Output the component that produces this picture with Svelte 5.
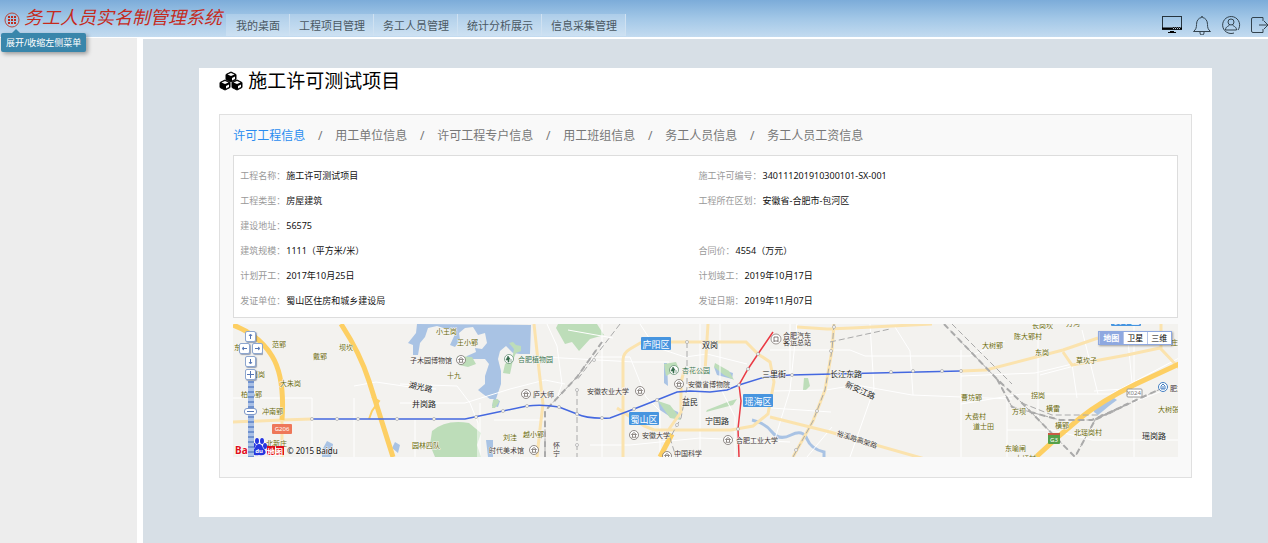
<script>
  const menu = ['我的桌面', '工程项目管理', '务工人员管理', '统计分析展示', '信息采集管理'];
  const tabs = ['许可工程信息', '用工单位信息', '许可工程专户信息', '用工班组信息', '务工人员信息', '务工人员工资信息'];
  let activeTab = $state(0);
  let mapType = $state('地图');
  let zoom = $state(11);

  const fields = [
    ['工程名称', '施工许可测试项目'],
    ['施工许可编号', '340111201910300101-SX-001'],
    ['工程类型', '房屋建筑'],
    ['工程所在区划', '安徽省-合肥市-包河区'],
    ['建设地址', '56575'],
    null,
    ['建筑规模', '1111（平方米/米）'],
    ['合同价', '4554（万元）'],
    ['计划开工', '2017年10月25日'],
    ['计划竣工', '2019年10月17日'],
    ['发证单位', '蜀山区住房和城乡建设局'],
    ['发证日期', '2019年11月07日']
  ];

  const towns = [
    [272, 344, '范郢'], [313, 356, '戴郢'], [339, 347, '坝坎'], [234, 347, '东岗'], [251, 374, '岗岗'],
    [280, 383, '大朱岗'], [241, 394, '柏小郢'], [262, 411, '冲南郢'], [266, 443, '北新庄'],
    [436, 331, '小王岗'], [457, 342, '王小郢'], [447, 375, '十九'], [412, 445, '园林四队'],
    [503, 437, '刘洼'], [523, 434, '越小郢'], [1032, 325, '长岗坎'], [1066, 323, '方河'], [1014, 336, '陈大郢村'],
    [982, 345, '大树郢'], [1035, 352, '东岗'], [1076, 360, '草坎子'], [961, 397, '曹坊郢'],
    [965, 416, '大费村'], [973, 426, '道士田'], [1031, 395, '拐岗'], [1046, 408, '横雷'],
    [1012, 411, '方坝'], [1055, 425, '横郢'], [1074, 432, '北瑶岗村'], [1005, 448, '东喻闸'],
    [1015, 458, '大圩村'], [1158, 409, '大树张'], [1171, 342, '庄义']
  ];
  const places = [
    [410, 360, '子木园博物馆'], [533, 394, '庐大师'], [587, 391, '安徽农业大学'],
    [688, 384, '安徽省博物院'], [642, 435, '安徽大学'], [736, 440, '合肥工业大学'],
    [674, 453, '中国科学'], [783, 335, '合肥汽车'], [783, 342, '客运总站'], [489, 450, '时代美术馆'],
    [553, 445, '怀'], [553, 453, '宁']
  ];
  const streets = [
    [412, 403, '井岗路', 0], [409, 384, '湖光路', 12], [702, 344, '双岗', 0], [762, 373, '三里街', 0],
    [830, 373, '长江东路', 0], [682, 401, '益民', 0], [705, 420, '宁国路', 0],
    [846, 383, '新安江路', 25], [1142, 435, '瑶岗路', 0]
  ];
  const districts = [[641, 337, '庐阳区'], [629, 412, '蜀山区'], [743, 394, '瑶海区'], [1111, 313, '长丰区']];
  const pins = [[461, 360], [526, 394], [640, 391], [679, 384], [634, 435], [728, 440], [667, 456], [534, 450]];
  const stops = [
    [312, 419], [337, 419], [358, 419], [397, 419], [434, 419], [476, 417], [503, 411], [527, 406], [559, 407],
    [577, 414], [602, 418], [634, 409], [657, 400], [739, 385], [748, 369], [758, 354], [738, 429], [792, 375],
    [891, 372], [913, 371], [942, 371], [961, 371], [687, 342], [677, 425], [577, 390], [577, 445], [594, 360],
    [834, 327], [831, 351], [817, 411], [796, 450]
  ];
</script>

<div class="page">
  <header>
    <button class="toggle" aria-label="展开/收缩左侧菜单">
      <svg viewBox="0 0 16 16" width="16" height="16">
        <circle cx="8" cy="8" r="7" fill="none" stroke="#b9483d" />
        <path d="M4 4h2v2H4zm3 0h2v2H7zm3 0h2v2h-2zM4 7h2v2H4zm3 0h2v2H7zm3 0h2v2h-2zM4 10h2v2H4zm3 0h2v2H7zm3 0h2v2h-2z" fill="#bf2c20" />
      </svg>
    </button>
    <span class="tip">展开/收缩左侧菜单</span>
    <h1>务工人员实名制管理系统</h1>
    <nav>
      {#each menu as item}<a href="#menu">{item}</a>{/each}
    </nav>
    <div class="tools">
      <button aria-label="桌面">
        <svg viewBox="0 0 22 20" width="22" height="20" fill="none" stroke="#26343e">
          <rect x="1.5" y="1.5" width="19" height="13" />
          <path d="M1 13.500h20" stroke="#000" stroke-width="2" />
          <path d="M12 12.500h1m1 0h1m1 0h1m1 0h1" stroke="#111" />
          <path d="M12 13.500h1m1 0h1m1 0h1m1 0h1" stroke="#bcd" />
          <path d="M7 17.500h8M9 16.500h4" stroke="#000" />
        </svg>
      </button>
      <button aria-label="通知">
        <svg viewBox="0 0 20 20" width="20" height="20" fill="none" stroke="#33434e">
          <path d="M1.500 16.500c2.500-2 3-4 3-7C4.500 5.500 6.500 3 9.500 2.500V1.500h1v1c3 .5 5 3 5 7 0 3 .5 5 3 7z" stroke-linejoin="round" />
          <path d="M8 17v1a2 2 0 0 0 4 0v-1" />
        </svg>
      </button>
      <button aria-label="用户">
        <svg viewBox="0 0 20 20" width="20" height="20" fill="none" stroke="#33434e">
          <path d="M17 15a8.500 8.500 0 1 0-4 3" />
          <circle cx="10" cy="7" r="3" />
          <path d="M8.500 9.500c0 2-4 1.500-4 5.500h11c0-4-4-3.500-4-5.500" />
        </svg>
      </button>
      <button aria-label="退出">
        <svg viewBox="0 0 20 20" width="20" height="20" fill="none" stroke="#33434e">
          <path d="M13 6V2.500H3Q1.500 2.500 1.500 4v12q0 1.500 1.500 1.500h10V14M9 10h10M14 6l4 4-4 4" />
        </svg>
      </button>
    </div>
  </header>

  <div class="body">
    <aside></aside>
    <main>
      <section class="card">
        <h2>
          <svg viewBox="0 0 24 20" width="24" height="20" stroke-linejoin="round">
            <g id="cube">
              <path d="M12 1l5 2.500v5L12 11 7 8.500v-5z" fill="#000" stroke="#000" />
              <path d="M12 2l3.500 1.500L12 5 8.500 3.500z" fill="#fff" />
              <path d="M13 7l3-1.500v2.500l-3 1.500z" fill="#fff" />
            </g>
            <use href="#cube" x="-6" y="8" />
            <use href="#cube" x="6" y="8" />
          </svg>
          施工许可测试项目
        </h2>

        <div class="panel">
          <div class="tabs">
            {#each tabs as tab, i}
              {#if i}<span class="slash">/</span>{/if}
              <button class:active={i === activeTab} onclick={() => (activeTab = i)}>{tab}</button>
            {/each}
          </div>

          <dl>
            {#each fields as f}
              <div>{#if f}<dt>{f[0]}：</dt><dd>{f[1]}</dd>{/if}</div>
            {/each}
          </dl>

          <div class="map">
            <svg class="canvas" viewBox="233 324 946 133" preserveAspectRatio="xMinYMin slice">
              <rect x="233" y="324" width="946" height="133" fill="#f3f2ef" />
              <g fill="#a9c3e4">
                <path d="M417 324l-1 9-8 10 5 2v10h5l2-12 5-6 3-9 9-2 13 4 6 2-6 13 5 2 5-7-1-7 6-5 8-1 5 8 7-2 2 10-5 6-7-1 1 4-9 4-2 3h20l4 5-4 12v8l-7 6 5 4 7 5h6l5-15v-13l-3-12 2-8 6-5 7 7 7 1h10l1-29z" />
                <path d="M494 398l6 3-2 6-6-1zM322 450l5-9 6 3-2 13h-9zM392 448l3-6 5 3-2 8zM486 440h7v17h-5zM664 363h3l1 23-4-3z" />
                <path d="M658 401l9 6 11 5 2 7-11-3-9-6zM714 367l19 6-1 6-15-4zM1093 409l6-4 8-3 7-4 3 2-8 6-6 5-5 4-4-3z" />
              </g>
              <g fill="#bdddb9">
                <path d="M558 324h39l7 11-14 4-11 12-7-9-7 2-9-16zM432 431q14-12 37-8l12 10-4 12 4 12h-46l-5-12z" />
                <path d="M509 343l4-1 3 3 5 1v5l-5 2-3 7-3 14-7-1 2-9 7-5 2-10zM493 400l5-1 1 3-4 6h-3z" />
                <path d="M457 356l15 1 4 7-8 3-9-2zM664 364l12-2 3 7-13 7zM658 401l12 4 7 9 4 6-11-2zM715 363l14 8 5 9-10-5-10-8zM707 410l23-9 7-2-4 6-27 7zM804 378h4l2 8-4 4h-3z" />
              </g>
              <g fill="none" stroke="#a9c3e4" stroke-width="3">
                <path d="M752 420q13 3 20 12t19 3 16 4 17 13v6" />
              </g>
              <g class="minor">
                <path d="M233 398h79v59M354 398v59M354 386l22-4 34 5 26 2M400 384l57 2 13 17 8 20v34M400 403h65l45-14 35-9 20 4M547 324l10 22 5 38-6 17" />
                <path d="M480 403v54M494 420h50M415 420v37M544 357l90 5h35M568 330l45 8M590 357h40l16 40 14 14v46M602 324v133M590 445h40l70-7 90 4M700 324v133M720 324v63l15 30v40" />
                <path d="M640 324l15 23 30 10 22-3 40 10M770 370l20 5v-51M770 350h80l15 6h105l35-15M797 324l-7 66-16 52M771 408l60 4M771 391l55-1 30-5 56 10 100 4M870 324l4 65-24 68M895 327l15 24 3 44M961 350v107M807 457l25-30" />
                <path d="M1038 324v94M961 376l74-3 62-15M1040 375l38-10M1007 430h45l40 10h86M1007 395v62M1072 364l5 34M1082 330l16 64M1134 324v133M1128 341l6 62M1134 402l36-14M961 404l60-10 90 0 68-36M1094 391l30-2" />
              </g>
              <g class="pale">
                <path d="M233 422l49-2 30-1M282 420v37M534 324l5 46 4 34-3 25-3 28M623 457v-97q0-7 7-11l12-7h104l12 12 12 8 4 20-6 32-15 12-22 4h-77l-10-4-27-18M681 382l3-11 21 1 3-48M681 382v30l-14 20M770 417l60 15 95 27M797 327l30 2 25-1 80-4M834 324l-2 26-7 40-12 31-20 36" />
                <path d="M961 371l25-1 77-20 35-12M1063 352l9 13 55-10 33-7 20 21M1161 324v24" />
              </g>
              <g class="major">
                <path d="M233 325q26 10 39 31t10 64M341 324q19 29 28 57t24 76M1036 457q21-20 43-38t57-35l43-20M672 434l-12 23" />
                <path d="M372 397l7 4-7 10-3 8" stroke-width="2" />
              </g>
              <g class="rail">
                <path d="M602 342l-25 35-32 34v46M620 324l-43 56M577 390v67M687 342v46l-6 30-11 20 6 19M834 324l-2 26-7 40-12 31-20 36M944 324l53 55 25 24 53 54 20-37 30-15 40-18M997 379l15 28 48 13h32l36-16M1022 403l30 12h55l30-15M952 324l60 60M830 342l60-13" />
              </g>
              <path class="rail-bright" d="M602 342l-25 35-32 34v46M944 324l53 55 25 24 53 54 20-37 30-15 40-18M997 379l15 28 48 13h32l36-16" />
              <path d="M312 419h153l38-8 24-5q15-2 32 1l18 7q10 5 33 4l24-9 23-9 20-8 13-1 20 1 17-2 12-5 26-8 25-2 171-4" fill="none" stroke="#4468e0" stroke-width="1.500" />
              <path d="M773 332l-15 22-10 15-9 16 2 16-3 28 1 28" fill="none" stroke="#ea3a44" stroke-width="1.500" />
              {#each stops as [x, y]}
                <circle cx={x} cy={y} r="1.500" fill="#fff" stroke="#a5a5a5" stroke-width="0.700" />
              {/each}
              {#each pins as [x, y]}
                <g transform="translate({x} {y})" fill="none" stroke="#77706c" stroke-width="0.800">
                  <circle r="4.500" fill="#fff" /><path d="M-2.500-.5L0-2.500 2.500-.5zM-1.500 0v2M1.500 0v2M-2.500 2.300h5" />
                </g>
              {/each}
              {#each [[509, 359], [674, 370]] as [x, y]}
                <circle cx={x} cy={y} r="4.500" fill="#fff" stroke="#679076" stroke-width="0.800" />
                <path d="M{x - 1} {y + 3}v-2h-2l2-4 2 3h-1v3zM{x + 2} {y}v3" fill="#376c4c" stroke="#376c4c" stroke-width="0.600" />
              {/each}
              <circle cx="776" cy="339" r="5" fill="#fff" stroke="#857c78" stroke-width="0.800" />
              <path d="M774 337h4v4h-4zM774 341v1M778 341v1" fill="none" stroke="#655c58" stroke-width="0.800" />
              <circle cx="1163" cy="387" r="4.500" fill="#fff" stroke="#447fc2" />
              <path d="M1161 389v-3l2-2 2 2v3zM1163 386v3" fill="none" stroke="#447fc2" />

              <g class="town">{#each towns as [x, y, t]}<text {x} {y}>{t}</text>{/each}</g>
              <g class="place">{#each places as [x, y, t]}<text {x} {y}>{t}</text>{/each}<text x="1170" y="388">肥东</text></g>
              <g class="park"><text x="518" y="359">合肥植物园</text><text x="682" y="370">杏花公园</text></g>
              <g class="street">
                {#each streets as [x, y, t, a]}<text {x} {y} transform="rotate({a} {x} {y})">{t}</text>{/each}
              </g>
              <g class="place"><text x="837" y="433" transform="rotate(18 837 433)">裕溪路高架路</text></g>
              {#each districts as [x, y, t]}
                <rect {x} {y} width="30" height="13" rx="1" fill="#4795df" />
                <text class="district" x={x + 15} y={y + 7}>{t}</text>
              {/each}
              <rect x="272" y="424" width="20" height="10" rx="1" fill="#ee7759" />
              <text class="shield" x="282" y="429">G206</text>
              <rect x="1048" y="434" width="12" height="10" rx="1" fill="#55a049" />
              <path d="M1048 434h12" stroke="#c85c45" stroke-width="2" />
              <text class="shield" x="1054" y="440">G3</text>
              <rect x="1127" y="389" width="15" height="8" rx="1" fill="#fff" stroke="#999" />
              <text class="shield gray" x="1134" y="393">X024</text>

              <text class="brand" x="235" y="450">Bai</text>
              <g fill="#2636df" stroke="#fff" stroke-width="1" paint-order="stroke">
                <ellipse cx="254" cy="446" rx="2" ry="3" /><ellipse cx="257" cy="441" rx="2" ry="3" />
                <ellipse cx="262" cy="441" rx="2" ry="3" /><ellipse cx="265" cy="446" rx="2" ry="3" />
                <path d="M259 444q3 0 4 4 4 3 2 6-2 2-6 1-4 1-6-1-2-3 2-6 1-4 4-4z" />
              </g>
              <text class="paw" x="259" y="451">du</text>
              <path d="M267 446h8v9h-8zM276 446h8v9h-8z" fill="#e10f1c" />
              <text class="maptag" x="275" y="451">地图</text>
              <text class="copy" x="287" y="450">© 2015 Baidu</text>
            </svg>

            <div class="pan">
              <button class="up" aria-label="向上"><svg viewBox="0 0 7 7"><path d="M3.500 6V2M2 3l1.500-2L5 3" /></svg></button>
              <button class="left" aria-label="向左"><svg viewBox="0 0 7 7"><path d="M6 3.500H2M3 2L1 3.500 3 5" /></svg></button>
              <button class="right" aria-label="向右"><svg viewBox="0 0 7 7"><path d="M1 3.500h4M4 2l2 1.500L4 5" /></svg></button>
              <button class="down" aria-label="向下"><svg viewBox="0 0 7 7"><path d="M3.500 1v4M2 4l1.500 2L5 4" /></svg></button>
              <button class="in" aria-label="放大"><svg viewBox="0 0 7 7"><path d="M3.500 0v7M0 3.500h7" /></svg></button>
              <input type="range" min="0" max="18" bind:value={zoom} aria-label="缩放级别" />
            </div>
            <div class="types">
              {#each ['地图', '卫星', '三维'] as t}
                <button class:on={mapType === t} onclick={() => (mapType = t)}>{t}</button>
              {/each}
            </div>
          </div>
        </div>
      </section>
    </main>
  </div>
</div>

<style>
  :global(body) { margin: 0; }
  .page {
    min-height: 100vh;
    display: flex;
    flex-direction: column;
    background: #fff;
    color: #111;
    font-family: "Noto Sans", "Noto Sans CJK SC", sans-serif;
    overflow-x: hidden;
  }
  button {
    padding: 0;
    border: 0;
    background: none;
    font-family: inherit;
    color: inherit;
    cursor: pointer;
  }
  svg { display: block; }
  header {
    position: relative;
    z-index: 2;
    display: flex;
    height: 37px;
    background: linear-gradient(#7cacd9, #a2c7e7 50%, #c3dbf0);
  }
  .toggle { margin: 2px 4px 0; align-self: center; }
  h1 {
    margin: 0;
    font-size: 18px;
    line-height: 35px;
    font-weight: 400;
    font-style: italic;
    color: #c52b1d;
    white-space: nowrap;
  }
  .tip {
    position: absolute;
    left: 1px;
    top: 33px;
    padding: 0 5px;
    border-radius: 2px;
    background: #3986ab;
    color: #fff;
    font-size: 9px;
    line-height: 19px;
    white-space: nowrap;
    box-shadow: 2px 2px 4px rgba(0, 0, 0, 0.35);
  }
  .tip::before {
    content: "";
    position: absolute;
    left: 11px;
    top: -4px;
    border: 4px solid transparent;
    border-top: 0;
    border-bottom-color: #3986ab;
  }
  nav {
    display: flex;
    margin: 14px 0 1px 4px;
  }
  nav a {
    box-sizing: border-box;
    min-width: 64px;
    padding: 0 8px 0 9px;
    border-right: 1px solid #cfe1f1;
    background: rgba(255, 255, 255, 0.2);
    color: #4a5862;
    font-size: 11px;
    line-height: 23px;
    text-align: center;
    text-decoration: none;
    white-space: nowrap;
  }
  .tools {
    display: flex;
    align-items: center;
    gap: 9px;
    margin: 13px -2px 0 auto;
  }
  .body {
    flex: 1;
    display: flex;
    gap: 6px;
    padding-top: 1px;
  }
  aside {
    flex: 0 0 137px;
    background: #ededed;
  }
  main {
    flex: 1;
    min-width: 0;
    margin-top: 1px;
    padding: 29px 0 26px;
    background: #d7dfe6;
  }
  .card {
    box-sizing: border-box;
    width: 90%;
    margin: 0 auto;
    padding: 0 20px 39px;
    background: #fff;
  }
  h2 {
    display: flex;
    align-items: center;
    gap: 5px;
    height: 26px;
    margin: 0 0 20px;
    font-size: 19px;
    line-height: 24px;
    font-weight: 400;
    color: #000;
  }
  .panel {
    padding: 0 13px 20px;
    border: 1px solid #e0e0e0;
    background: #f9f9f9;
  }
  .tabs {
    display: flex;
    align-items: center;
    height: 40px;
    font-size: 12px;
    color: #777;
  }
  .tabs button { font-size: 12px; }
  .tabs .active { color: #2a8cf0; }
  .slash {
    width: 30px;
    text-align: center;
  }
  dl {
    display: grid;
    grid-template-columns: 33fr 34fr;
    margin: 0 0 6px;
    padding: 7px 6px 4px;
    border: 1px solid #ddd;
    background: #fff;
    font-size: 9px;
    line-height: 25px;
  }
  dl div {
    display: flex;
    min-height: 25px;
  }
  dt { color: #999; }
  dd { margin: 0 0 0 1px; }
  .map { position: relative; }
  .canvas {
    width: 100%;
    height: 133px;
  }
  .canvas text {
    font-size: 7px;
    dominant-baseline: central;
    paint-order: stroke;
    stroke: #f8f7f4;
    stroke-width: 1px;
  }
  .minor { fill: none; stroke: #fff; stroke-width: 1px; }
  .pale { fill: none; stroke: #fbe3ae; stroke-width: 3px; }
  .major { fill: none; stroke: #fdcf63; stroke-width: 5px; }
  .rail { fill: none; stroke: #aaa; stroke-width: 1px; stroke-dasharray: 6 3; }
  .rail-bright { fill: none; stroke: #aaa; stroke-width: 2px; stroke-dasharray: 6 4; }
  .town { fill: #69690a; }
  .place { fill: #423a38; }
  .park { fill: #3f7855; }
  .street { fill: #222; }
  .canvas .street text { font-size: 8px; }
  .canvas .district { font-size: 9px; fill: #fff; stroke: none; text-anchor: middle; }
  .canvas .shield { font-size: 6px; fill: #fff; stroke: none; text-anchor: middle; }
  .canvas .gray { fill: #777; }
  .canvas .brand { font-size: 10px; font-weight: 700; fill: #e10f1c; stroke: #fff; }
  .canvas .paw { font-size: 6px; font-weight: 700; fill: #fff; stroke: none; text-anchor: middle; }
  .canvas .maptag { font-size: 8px; font-weight: 700; fill: #fff; stroke: none; text-anchor: middle; }
  .canvas .copy { font-size: 8px; fill: #111; }
  .pan {
    position: absolute;
    left: 5px;
    top: 6px;
    display: grid;
    grid-template-columns: 12px 12px;
    grid-template-rows: 12px 13px 13px 13px 76px;
    gap: 0 1px;
    height: 127px;
    overflow: hidden;
    place-items: center;
  }
  .pan button {
    box-sizing: border-box;
    width: 11px;
    height: 11px;
    padding: 1px;
    border: 1px solid #8da6cf;
    border-radius: 2px;
    background: #fff;
    box-shadow: 1px 1px 1px rgba(60, 80, 120, 0.5);
  }
  .pan svg { width: 7px; height: 7px; fill: none; stroke: #5576b4; }
  .pan .up, .pan .down, .pan .in, .pan input { grid-column: 1 / 3; }
  .pan input {
    appearance: none;
    writing-mode: vertical-lr;
    direction: rtl;
    width: 13px;
    height: 76px;
    margin: 0;
    background: repeating-linear-gradient(#6f91ce 0 2px, #a9c0e6 2px 5px) center / 6px 100% no-repeat;
  }
  .pan input::-webkit-slider-thumb {
    appearance: none;
    box-sizing: border-box;
    width: 13px;
    height: 7px;
    border: 1px solid #7e98c8;
    border-radius: 3px;
    background: linear-gradient(#5576b4, #5576b4) center / 7px 1px no-repeat #fff;
  }
  .types {
    position: absolute;
    right: 6px;
    top: 7px;
    display: flex;
    border: 1px solid #8ea8e0;
    background: #fff;
    box-shadow: 1px 1px 2px rgba(0, 0, 0, 0.35);
  }
  .types button {
    width: 24px;
    font-size: 8px;
    line-height: 12px;
    color: #000;
    border-left: 1px solid #b6c5e6;
  }
  .types .on {
    background: #8ea8e0;
    color: #fff;
    font-weight: 700;
  }
</style>
